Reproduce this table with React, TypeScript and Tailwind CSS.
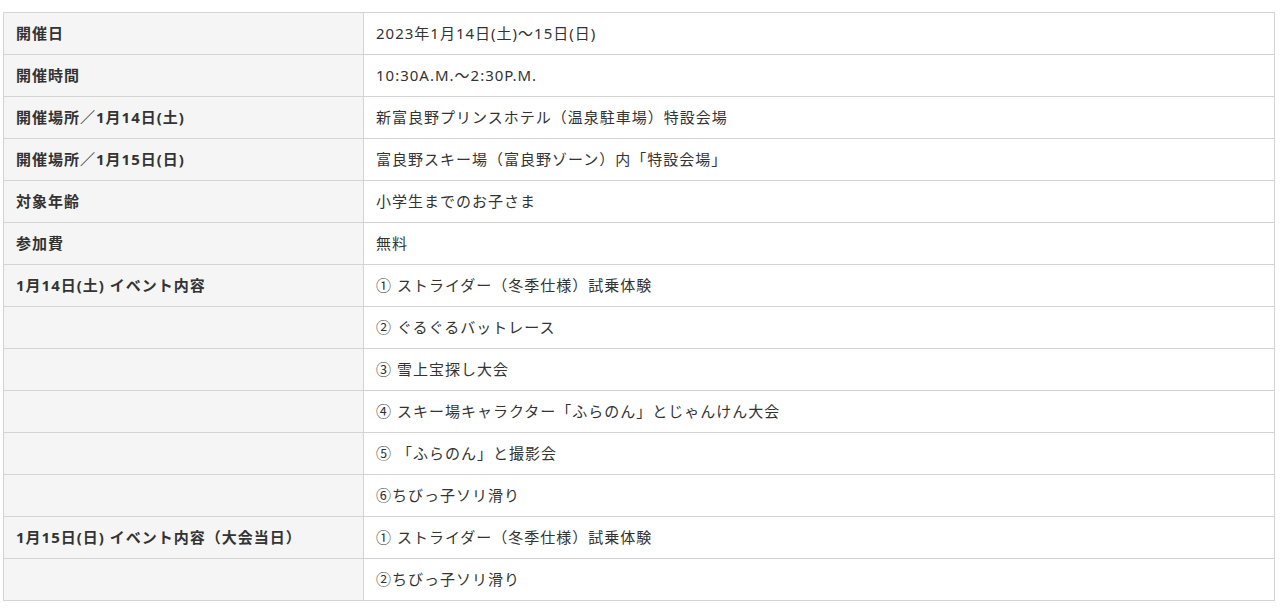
const rows: [string, string][] = [
  ['開催日', '2023年1月14日(土)〜15日(日)'],
  ['開催時間', '10:30A.M.〜2:30P.M.'],
  ['開催場所／1月14日(土)', '新富良野プリンスホテル（温泉駐車場）特設会場'],
  ['開催場所／1月15日(日)', '富良野スキー場（富良野ゾーン）内「特設会場」'],
  ['対象年齢', '小学生までのお子さま'],
  ['参加費', '無料'],
  ['1月14日(土) イベント内容', '① ストライダー（冬季仕様）試乗体験'],
  ['', '② ぐるぐるバットレース'],
  ['', '③ 雪上宝探し大会'],
  ['', '④ スキー場キャラクター「ふらのん」とじゃんけん大会'],
  ['', '⑤ 「ふらのん」と撮影会'],
  ['', '⑥ちびっ子ソリ滑り'],
  ['1月15日(日) イベント内容（大会当日）', '① ストライダー（冬季仕様）試乗体験'],
  ['', '②ちびっ子ソリ滑り'],
];

export default function App() {
  return (
    <div className="bg-white pt-3 pl-[3px] pr-[5px] min-h-[611px] font-['Noto_Sans','Noto_Sans_CJK_JP',sans-serif] text-[#333] text-[15px] tracking-[1px]">
      <table className="w-full border-collapse border border-[#d4d4d4]">
        <tbody>
          {rows.map(([label, value], i) => (
            <tr key={i} className="h-[42px]">
              <th className="w-[360px] bg-[#f5f5f5] border border-[#d4d4d4] px-3 text-left font-bold align-middle">
                {label}
              </th>
              <td className="border border-[#d4d4d4] px-3 align-middle">{value}</td>
            </tr>
          ))}
        </tbody>
      </table>
    </div>
  );
}
